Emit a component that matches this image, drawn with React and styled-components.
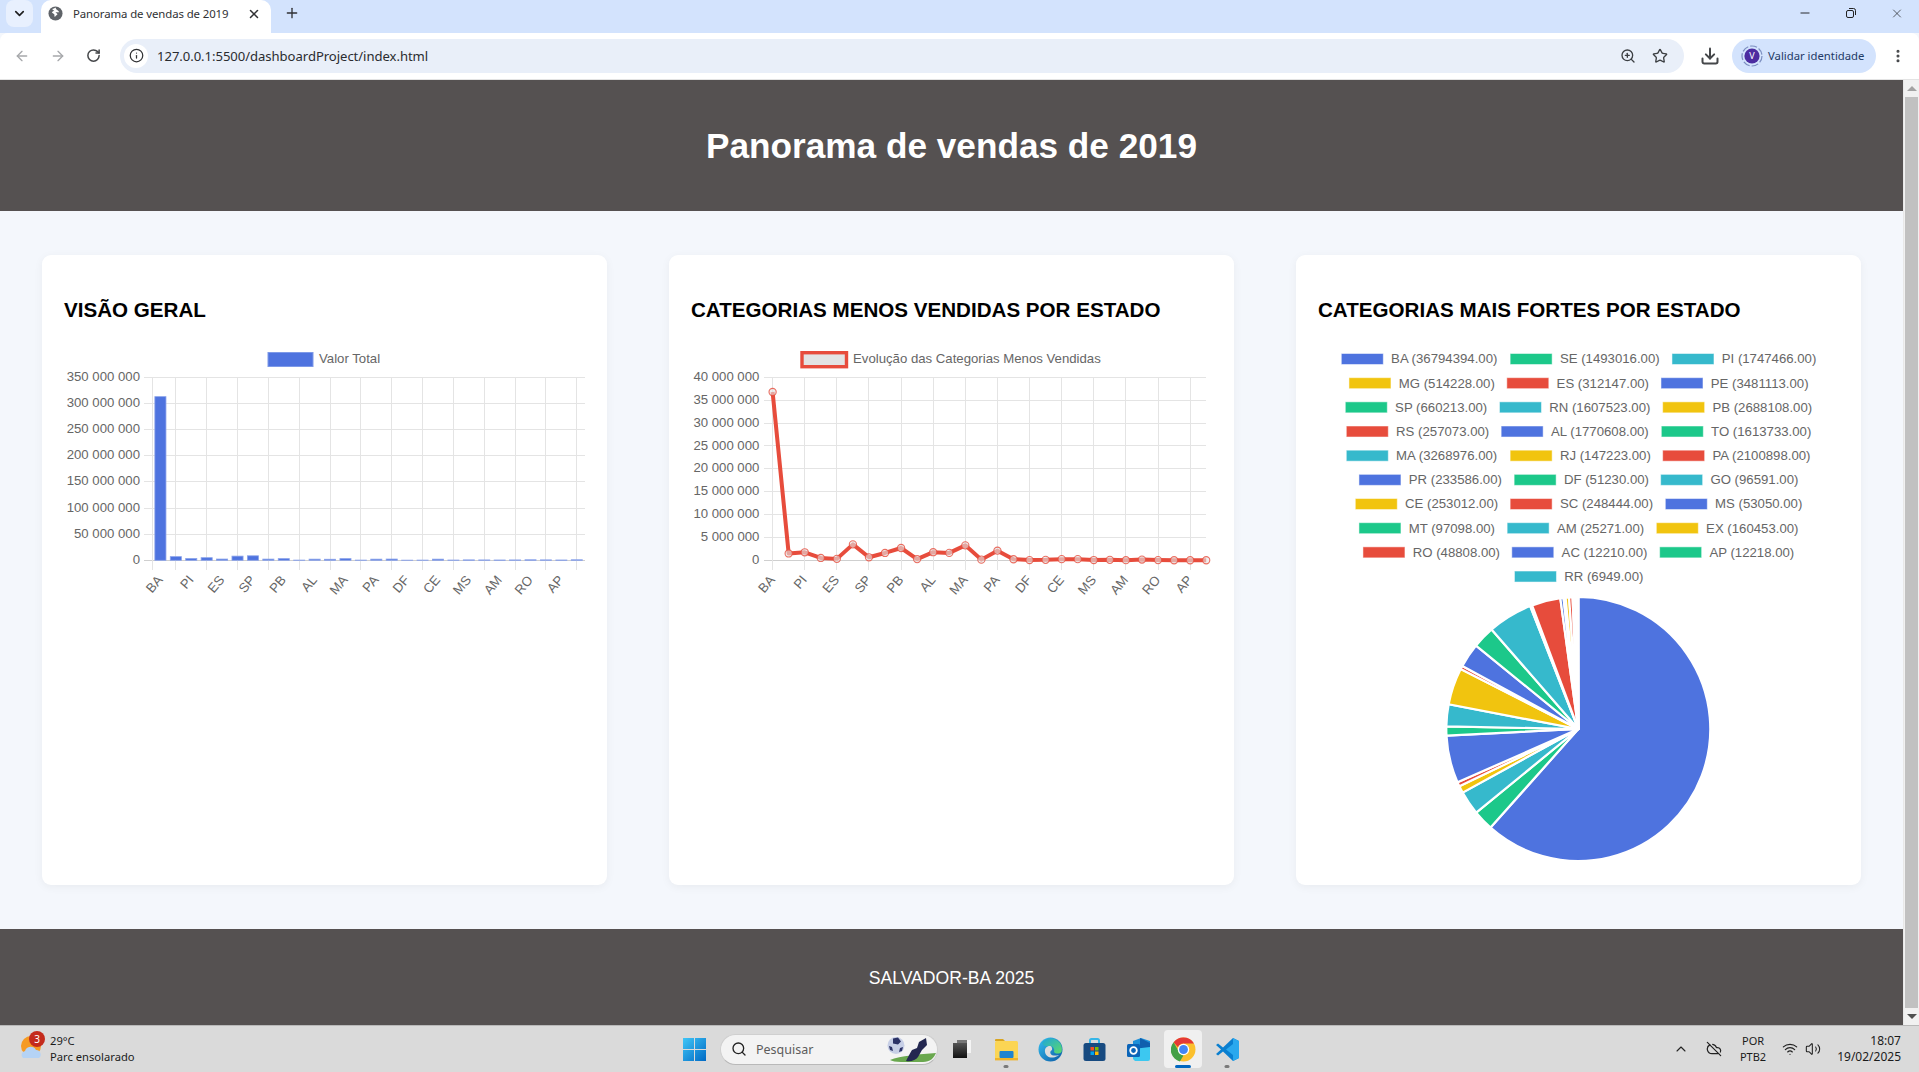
import React from "react";
import styled, { createGlobalStyle } from "styled-components";
import { ChevronDown, X, Plus, ArrowLeft, ArrowRight, RotateCw, Info, ZoomIn, Star, Download, MoreVertical, Minus, Search, ChevronUp, CloudOff, Wifi, Volume2 } from "lucide-react";

const Global = createGlobalStyle`
  html, body { margin: 0; padding: 0; width: 1919px; height: 1072px; overflow: hidden; background: #f4f7fc; }
  * { box-sizing: border-box; }
`;

const Screen = styled.div`
  width: 1919px; height: 1072px; display: flex; flex-direction: column; overflow: hidden;
  font-family: "Liberation Sans", Arial, sans-serif;
`;
const TabStrip = styled.div`
  height: 33px; flex: none; background: #d3e3fd; display: flex; align-items: flex-start; padding-left: 6px; color: #1f1f1f;
`;
const TabSearch = styled.div`
  width: 27px; height: 27px; border-radius: 8px; background: #e8f0fe; display: flex; align-items: center; justify-content: center; margin-right: 8px;
`;
const Tab = styled.div`
  width: 230px; height: 33px; background: #fff; border-radius: 10px 10px 0 0; display: flex; align-items: center; padding: 0 10px 6px 7px;
  font: 11.4px "Noto Sans", sans-serif; color: #303134; position: relative;
`;
const TabTitle = styled.span` margin-left: 10px; flex: 1; white-space: nowrap; letter-spacing: -0.1px; `;
const NewTab = styled.div` margin: 5px 0 0 13px; width: 16px; height: 16px; display: flex; color: #303134; `;
const WindowControls = styled.div`
  margin-left: auto; display: flex; align-items: center; height: 26px; gap: 0; padding-right: 15px;
`;
const WinButton = styled.div` width: 14px; height: 14px; margin-left: ${p => p.$gap}px; display: flex; color: #111; `;

const Toolbar = styled.div`
  height: 47px; flex: none; background: #fff; border-bottom: 1px solid #e3e3e3; display: flex; align-items: center; padding: 0 0 1px 0; border-radius: 8px 8px 0 0;
`;
const NavIcon = styled.div`
  width: ${p => p.$w || 16}px; height: ${p => p.$w || 16}px; margin-left: ${p => p.$gap}px; display: flex; color: ${p => p.$dim ? "#a6a8ab" : "#45474a"};
`;
const Omnibox = styled.div`
  width: 1564px; height: 34px; margin-left: 18px; border-radius: 17px; background: #e9eff9; display: flex; align-items: center; padding-left: 4px;
`;
const InfoChip = styled.div`
  width: 24px; height: 24px; border-radius: 50%; background: #fff; display: flex; align-items: center; justify-content: center; color: #303134; flex: none;
`;
const Url = styled.span`
  margin-left: 9px; font: 13.1px "Noto Sans", sans-serif; color: #2a2c30; letter-spacing: -0.05px; flex: 1; white-space: nowrap;
`;
const OmniIcon = styled.div` width: 16px; height: 16px; display: flex; color: #3c3f43; margin-right: ${p => p.$gap}px; `;
const ProfilePill = styled.div`
  width: 144px; height: 34px; margin-left: 12px; border-radius: 17px; background: #d3e3fd; display: flex; align-items: center; padding-left: 9px;
  font: 11.3px "Noto Sans", sans-serif; color: #1e3a66; white-space: nowrap;
`;
const PillText = styled.span` margin-left: 5px; `;

const ViewArea = styled.div` flex: 1; min-height: 0; display: flex; `;
const Page = styled.div` flex: 1; min-width: 0; display: flex; flex-direction: column; background: #f4f7fc; `;
const PageHeader = styled.header`
  height: 131px; flex: none; background: #555151; color: #fff; display: flex; align-items: center; justify-content: center;
`;
const PageTitle = styled.h1` margin: 0; font-size: 35.2px; font-weight: 700; line-height: 1; `;
const Main = styled.main`
  flex: 1; min-height: 0; display: grid; grid-template-columns: repeat(3, 1fr); grid-template-rows: minmax(0, 1fr); gap: 62px; padding: 44px 42px;
`;
const Card = styled.section`
  background: #fff; border-radius: 9px; padding: 22px; box-shadow: 0 2px 10px rgba(0,0,0,.05); min-height: 0;
`;
const CardTitle = styled.h2`
  margin: 20px 0 22px; font-size: 20.6px; line-height: 26px; font-weight: 700; color: #000; white-space: nowrap;
`;
const PageFooter = styled.footer`
  height: 96px; flex: none; background: #555151; color: #fff; display: flex; align-items: center; justify-content: center; font-size: 17.6px; padding-top: 2px;
`;
const ChartSvg = styled.svg` display: block; overflow: visible; `;
const Label = styled.text` font: 13.2px "Liberation Sans", Arial, sans-serif; fill: #666; `;

const Scrollbar = styled.div`
  width: 16px; flex: none; background: #f1f1f1; display: flex; flex-direction: column; align-items: center; border-left: 1px solid #e8e8e8;
`;
const ScrollArrow = styled.div`
  height: 17px; flex: none; display: flex; align-items: center; justify-content: center;
  &::before { content: ""; border-left: 5px solid transparent; border-right: 5px solid transparent;
    ${p => p.$up ? "border-bottom: 5px solid #a3a3a3;" : "border-top: 5px solid #505050;"} }
`;
const ScrollThumb = styled.div` flex: 1; width: 13px; background: #c1c1c1; `;

const Taskbar = styled.div`
  height: 47px; flex: none; background: #dadada; border-top: 1px solid #b8b8b8; display: flex; align-items: center; color: #1b1b1b;
  font: 11.2px "Noto Sans", sans-serif;
`;
const Weather = styled.div` width: 683px; flex: none; display: flex; align-items: center; padding-left: 20px; `;
const WeatherIcon = styled.div` width: 26px; height: 30px; position: relative; flex: none; `;
const Badge = styled.div`
  position: absolute; left: 9px; top: -3px; width: 16px; height: 16px; border-radius: 50%; background: #c42b1c; color: #fff;
  font-size: 10px; display: flex; align-items: center; justify-content: center; line-height: 1;
`;
const TrayText = styled.div` display: flex; flex-direction: column; line-height: 16px; margin-left: ${p => p.$gap || 4}px; text-align: ${p => p.$align || "left"}; white-space: nowrap; font-size: ${p => p.$size || 11.2}px; `;
const SearchPill = styled.div`
  width: 218px; height: 31px; margin-left: 14px; background: #f3f3f3; border-radius: 16px; border: 1px solid #cfcfcf; border-bottom-color: #b9b9b9; display: flex; align-items: center; padding: 0 1px 0 10px;
  font-size: 12.5px; color: #5c5c5c; position: relative; flex: none;
`;
const SearchText = styled.span` margin-left: 9px; flex: 1; `;
const TaskTile = styled.div`
  width: 44.2px; height: 38px; flex: none; display: flex; align-items: center; justify-content: center; position: relative; border-radius: 4px;
  margin-left: ${p => p.$first ? 2 : 0}px;
  ${p => p.$active && "background: #f0f0f0; width: 38px; margin: 0 3.1px;"}
  &::after {
    ${p => p.$dot && `content: ""; position: absolute; bottom: 0; left: 50%; transform: translateX(-50%); width: 5px; height: 3px; border-radius: 2px; background: #7a7a7a;`}
    ${p => p.$active && `content: ""; position: absolute; bottom: 0; left: 50%; transform: translateX(-50%); width: 16px; height: 3px; border-radius: 2px; background: #0067c0;`}
  }
`;
const Tray = styled.div` margin-left: auto; display: flex; align-items: center; padding-right: 18px; `;
const TrayIcon = styled.div` width: 16px; height: 16px; display: flex; margin-left: ${p => p.$gap}px; color: #222; `;

const BLUE = "#4e73df", GREEN = "#1cc88a", TEAL = "#36b9cc", YELLOW = "#f1c40f", RED = "#e74c3c";
const PAL = [BLUE, GREEN, TEAL, YELLOW, RED];
const STATES = [["BA",36794394],["SE",1493016],["PI",1747466],["MG",514228],["ES",312147],["PE",3481113],["SP",660213],["RN",1607523],["PB",2688108],["RS",257073],["AL",1770608],["TO",1613733],["MA",3268976],["RJ",147223],["PA",2100898],["PR",233586],["DF",51230],["GO",96591],["CE",253012],["SC",248444],["MS",53050],["MT",97098],["AM",25271],["EX",160453],["RO",48808],["AC",12210],["AP",12218],["RR",6949]];
const BAR_M = [313,7,3.4,5,2.4,8,8.6,2.3,3.2,.4,2.2,2,3.2,.4,2.2,2.4,.3,.4,2.2,.5,.8,.7,.6,.7,1,.8,.6,1];
const LEGEND_ROWS = [[94,601,1087],[117,591,1054],[106,569,1059],[109,574,1055],[109,601,1059],[147,613,1053],[136,601,1067],[147,592,1040],[159,606,1050],[614]];

const Top = 32.3, Bot = 215.3;

function Grid({ left, right, xs, count }) {
  const step = (Bot - Top) / count;
  return (
    <g stroke="#e4e4e4" strokeWidth="1" shapeRendering="crispEdges">
      {Array.from({ length: count + 1 }, (_, i) => (
        <line key={i} x1={left - 9} x2={right} y1={Top + step * i} y2={Top + step * i} stroke={i === count ? "#cfcfcf" : undefined} />
      ))}
      {xs.map((x, i) => <line key={i} x1={x} x2={x} y1={Top} y2={Bot + 10} />)}
    </g>
  );
}
function YLabels({ x, values, count }) {
  const step = (Bot - Top) / count;
  return values.map((v, i) => (
    <Label key={v} x={x} y={Top + step * i + 3.6} textAnchor="end">{v}</Label>
  ));
}
function XLabels({ at }) {
  const names = STATES.filter((_, i) => i % 2 === 0).map(s => s[0]).slice(0, 14);
  return names.map((n, i) => {
    const x = at(i * 2) + 3, y = Bot + 20;
    return <Label key={n} x={x} y={y} textAnchor="end" transform={`rotate(-50 ${x} ${y})`}>{n}</Label>;
  });
}

function BarChart() {
  const left = 88.7, right = 520.5, s = (right - left) / 28;
  const y = v => Bot - v / 350 * (Bot - Top);
  const xs = [left, ...Array.from({ length: 14 }, (_, i) => left + s * (1.5 + i * 2))];
  return (
    <ChartSvg width="521" height="270">
      <rect x="204" y="7.5" width="45" height="14" fill={BLUE} stroke="#7e9ae8" />
      <Label x="255" y="18">Valor Total</Label>
      <Grid left={left} right={right} xs={xs} count={7} />
      <YLabels x={76} count={7} values={["350 000 000","300 000 000","250 000 000","200 000 000","150 000 000","100 000 000","50 000 000","0"]} />
      {BAR_M.map((v, i) => (
        <rect key={i} x={left + s * (i + .5) - 5.55} width="11.1" y={y(v)} height={Bot - y(v)} fill={BLUE} stroke="#8ba3ea" strokeWidth=".8" />
      ))}
      <XLabels at={i => left + s * (i + .5)} />
    </ChartSvg>
  );
}

function LineChart() {
  const left = 81.6, right = 515.2, s = (right - left) / 27;
  const y = v => Bot - v / 4e7 * (Bot - Top);
  const xs = Array.from({ length: 14 }, (_, i) => left + s * i * 2);
  const pts = STATES.map(([, v], i) => [left + s * i, y(v)]);
  return (
    <ChartSvg width="521" height="270">
      <rect x="111" y="7.7" width="44.5" height="14" fill="#e3e3e3" stroke={RED} strokeWidth="3.4" />
      <Label x="162" y="18">Evolução das Categorias Menos Vendidas</Label>
      <Grid left={left} right={right} xs={xs} count={8} />
      <YLabels x={68.4} count={8} values={["40 000 000","35 000 000","30 000 000","25 000 000","20 000 000","15 000 000","10 000 000","5 000 000","0"]} />
      <polyline points={pts.map(p => p.join(",")).join(" ")} fill="none" stroke={RED} strokeWidth="4" strokeLinejoin="round" />
      {pts.map(([cx, cy], i) => (
        <circle key={i} cx={cx} cy={cy} r="3.6" fill="rgba(228,228,228,.6)" stroke={RED} strokeOpacity=".8" strokeWidth="1.1" />
      ))}
      <XLabels at={i => left + s * i} />
    </ChartSvg>
  );
}

function PieChart() {
  const ox = 1318, oy = 345;
  const cx = 1578.3 - ox, cy = 729 - oy, r = 132;
  const total = STATES.reduce((a, s) => a + s[1], 0);
  let a = -Math.PI / 2, idx = 0;
  const slices = STATES.map(([n, v], i) => {
    const b = a + v / total * Math.PI * 2;
    const d = `M${cx} ${cy}L${cx + r * Math.cos(a)} ${cy + r * Math.sin(a)}A${r} ${r} 0 ${b - a > Math.PI ? 1 : 0} 1 ${cx + r * Math.cos(b)} ${cy + r * Math.sin(b)}Z`;
    a = b;
    return <path key={n} d={d} fill={PAL[i % 5]} stroke="#fff" strokeWidth="2.2" strokeLinejoin="round" />;
  });
  return (
    <ChartSvg width="521" height="518">
      {LEGEND_ROWS.map((row, ri) => row.map(bx => {
        const i = idx++;
        const x = 1310 + bx / 3.003 - ox;
        const y = 14 + ri * 24.17;
        return (
          <g key={i}>
            <rect x={x} y={y - 5.5} width="42" height="11" fill={PAL[i % 5]} stroke="#fff" strokeOpacity=".5" />
            <Label x={x + 49.8} y={y + 4.4}>{`${STATES[i][0]} (${STATES[i][1]}.00)`}</Label>
          </g>
        );
      }))}
      {slices}
    </ChartSvg>
  );
}

const Globe = () => (
  <svg width="15" height="15" viewBox="0 0 16 16"><circle cx="8" cy="8" r="7.5" fill="#5f6368" /><path d="M8 1.6c-.9 1-2.4 1.2-3.6 1.6.5 1 1.8 1.2 2.3 2.2-.6.8-2 .4-2.6 1.1.4 1 1.7 1.6 2.6 2.3.4.9-.2 2.1.6 2.8.7-1.1 2-1.8 2.8-2.9-.4-.8-1.6-1.3-2.3-1.7 1.3-.5 3-.4 4.2-.3-.6-1.2-1.6-2-2.6-2.6-.6-.5-.9-1.3-1.4-2.5z" fill="#fff" /></svg>
);
const Restore = () => (
  <svg width="14" height="14" viewBox="0 0 14 14" fill="none" stroke="#222" strokeWidth="1"><rect x="2.5" y="4.5" width="7" height="7" rx="1.5" /><path d="M5 2.5h4.500a2 2 0 0 1 2 2V9" /></svg>
);
const Avatar = () => (
  <svg width="22" height="22" viewBox="0 0 22 22" style={{ flex: "none" }}><circle cx="11" cy="11" r="10" fill="none" stroke="#7c8fc0" strokeWidth="1.2" strokeDasharray="7 2" /><circle cx="11" cy="11" r="7.6" fill="#4c2ca0" /><text x="11" y="14.2" textAnchor="middle" fontSize="9" fill="#fff" fontFamily="Noto Sans">V</text></svg>
);
const WinLogo = () => (
  <svg width="23" height="23" viewBox="0 0 23 23" style={{ flex: "none" }}><defs><linearGradient id="w" x1="0" y1="0" x2="1" y2="1"><stop offset="0" stopColor="#3fc6f7" /><stop offset="1" stopColor="#0069c4" /></linearGradient></defs><path d="M0 0h11v11H0zM12 0h11v11H12zM0 12h11v11H0zM12 12h11v11H12z" fill="url(#w)" /></svg>
);
const Ball = () => (
  <svg width="51" height="28" viewBox="0 0 51 28" style={{ flex: "none" }}><path d="M5 25c10-4 30-6 46-7-2 5-6 9-13 9H16c-5 0-9-1-11-2z" fill="#6aa84f" /><circle cx="11" cy="10.500" r="8.500" fill="#c7cfe6" /><path d="M8 3.500l5-1 3 4-3 3-5-1zM4 11l3 1 1 4-3-1zM15 13l3-1-1 4-3 1z" fill="#2b3266" /><path d="M21 26c2-4 4-8 6-11l5-2 2-6 7-4 1 7-5 5-4 7c-2 3-7 5-12 4z" fill="#232750" /></svg>
);
const FolderIcon = () => (
  <svg width="25" height="25" viewBox="0 0 25 25"><path d="M1 3a1 1 0 0 1 1-1h7l2 2h-10z" fill="#d9a520" /><rect x="1" y="4" width="23" height="19" rx="1.500" fill="#fbd554" /><rect x="5.500" y="14" width="14" height="7" rx="1" fill="#1f84d0" /><rect x="1" y="21" width="23" height="2.400" fill="#f0b429" /></svg>
);
const EdgeIcon = () => (
  <svg width="25" height="25" viewBox="0 0 25 25"><defs><linearGradient id="e1" x1="0" y1="0" x2="1" y2="1"><stop offset="0" stopColor="#35c1f1" /><stop offset="1" stopColor="#0c59a4" /></linearGradient><linearGradient id="e2" x1="0" y1="0" x2="1" y2="1"><stop offset="0" stopColor="#1ea5d9" /><stop offset="1" stopColor="#5fdb6a" /></linearGradient></defs><circle cx="12.500" cy="12.500" r="12" fill="url(#e1)" /><path d="M4 6c3-5 11-6 16-2 4 3 4.500 8 3.500 11-2 2-6 2-7.500 0 1-3-1-6-4-6C9 9 6 10 4 6z" fill="url(#e2)" /><path d="M12 9c-3.500 0-5.500 2.500-5 6 .5 3.500 4 6 8 5.500 2.500-.3 4.500-1.200 6-2.500-3 1-7.500 1-8.500-1.500-.7-2 .5-3 1.500-3.500.5-2-.5-4-2-4z" fill="#dcdcdc" /></svg>
);
const StoreIcon = () => (
  <svg width="25" height="25" viewBox="0 0 25 25"><path d="M8 7V3.500A1.500 1.500 0 0 1 9.500 2h6A1.500 1.500 0 0 1 17 3.500V7" fill="none" stroke="#35b6e8" strokeWidth="2" /><rect x="1.500" y="6" width="22" height="18" rx="2.500" fill="#174a80" /><path d="M8.500 10h3.500v3.500H8.500z" fill="#f25022" /><path d="M13 10h3.500v3.500H13z" fill="#7fba00" /><path d="M8.500 14.500h3.500V18H8.500z" fill="#00a4ef" /><path d="M13 14.500h3.500V18H13z" fill="#ffb900" /></svg>
);
const OutlookIcon = () => (
  <svg width="25" height="25" viewBox="0 0 25 25"><path d="M7 4l8-3 9 3v18H7z" fill="#1e8fd8" /><path d="M14 1l10 5v6l-10 2z" fill="#0f5fae" /><path d="M7 12l17-2v12a2 2 0 0 1-2 2H9l-2-2z" fill="#3cc8f0" /><rect x="1" y="7" width="13" height="13" rx="1.500" fill="#0a64b8" /><circle cx="7.500" cy="13.500" r="3.300" fill="none" stroke="#fff" strokeWidth="1.800" /></svg>
);
const ChromeIcon = () => (
  <svg width="25" height="25" viewBox="0 0 48 48"><circle cx="24" cy="24" r="23" fill="#fbc02d" /><path d="M24 1a23 23 0 0 1 20 11.500H24a11.500 11.500 0 0 0-10.500 7L5 10A23 23 0 0 1 24 1z" fill="#e53935" /><path d="M5 10l9.500 17A11.500 11.500 0 0 0 24 35.500L17 47A23 23 0 0 1 5 10z" fill="#43a047" /><circle cx="24" cy="24" r="11" fill="#fff" /><circle cx="24" cy="24" r="8.500" fill="#4285f4" /></svg>
);
const CodeIcon = () => (
  <svg width="25" height="25" viewBox="0 0 25 25"><path d="M18 1l6 3v17l-6 3-10-9.500-5 4L1 17l5-4.500L1 8l2-1.500 5 4z" fill="#0a7fd0" /><path d="M18 1l6 3v17l-6 3V7l-7 5.500 7 5.500" fill="#2aa8ee" /></svg>
);
const SunCloud = () => (
  <svg width="26" height="30" viewBox="0 0 26 30"><circle cx="11" cy="12" r="10" fill="#f59a23" /><path d="M3 24a4 4 0 0 1 2-7 6 6 0 0 1 11-1 4.500 4.500 0 0 1 3 8z" fill="#b5d3f5" /></svg>
);
const TaskView = () => (
  <svg width="22" height="22" viewBox="0 0 22 22"><defs><linearGradient id="tv" x1="0" y1="0" x2="0" y2="1"><stop offset="0" stopColor="#555" /><stop offset="1" stopColor="#111" /></linearGradient></defs><rect x="2" y="5" width="14" height="15" fill="url(#tv)" /><rect x="6" y="2" width="14" height="3" fill="#777" /><rect x="16" y="2" width="4" height="13" fill="#f4f4f4" /></svg>
);

export default function App() {
  return (
    <>
      <Global />
      <Screen>
        <TabStrip>
          <TabSearch><ChevronDown size={15} strokeWidth={2.6} /></TabSearch>
          <Tab>
            <Globe />
            <TabTitle>Panorama de vendas de 2019</TabTitle>
            <X size={14} strokeWidth={2.6} />
          </Tab>
          <NewTab><Plus size={16} strokeWidth={2} /></NewTab>
          <WindowControls>
            <WinButton $gap={0}><Minus size={14} strokeWidth={1.5} /></WinButton>
            <WinButton $gap={32}><Restore /></WinButton>
            <WinButton $gap={32}><X size={15} strokeWidth={1.1} /></WinButton>
          </WindowControls>
        </TabStrip>
        <Toolbar>
          <NavIcon $gap={14} $dim><ArrowLeft size={16} /></NavIcon>
          <NavIcon $gap={20} $dim><ArrowRight size={16} /></NavIcon>
          <NavIcon $gap={20}><RotateCw size={15} strokeWidth={2.4} /></NavIcon>
          <Omnibox>
            <InfoChip><Info size={15} strokeWidth={2} /></InfoChip>
            <Url>127.0.0.1:5500/dashboardProject/index.html</Url>
            <OmniIcon $gap={16}><ZoomIn size={16} strokeWidth={2} /></OmniIcon>
            <OmniIcon $gap={16}><Star size={16} strokeWidth={2} /></OmniIcon>
          </Omnibox>
          <NavIcon $gap={16} $w={20}><Download size={20} strokeWidth={2.4} /></NavIcon>
          <ProfilePill><Avatar /><PillText>Validar identidade</PillText></ProfilePill>
          <NavIcon $gap={14}><MoreVertical size={16} strokeWidth={2.6} /></NavIcon>
        </Toolbar>
        <ViewArea>
          <Page>
            <PageHeader><PageTitle>Panorama de vendas de 2019</PageTitle></PageHeader>
            <Main>
              <Card><CardTitle>VISÃO GERAL</CardTitle><BarChart /></Card>
              <Card><CardTitle>CATEGORIAS MENOS VENDIDAS POR ESTADO</CardTitle><LineChart /></Card>
              <Card><CardTitle>CATEGORIAS MAIS FORTES POR ESTADO</CardTitle><PieChart /></Card>
            </Main>
            <PageFooter>SALVADOR-BA 2025</PageFooter>
          </Page>
          <Scrollbar>
            <ScrollArrow $up />
            <ScrollThumb />
            <ScrollArrow />
          </Scrollbar>
        </ViewArea>
        <Taskbar>
          <Weather>
            <WeatherIcon><SunCloud /><Badge>3</Badge></WeatherIcon>
            <TrayText><span>29°C</span><span>Parc ensolarado</span></TrayText>
          </Weather>
          <WinLogo />
          <SearchPill>
            <Search size={16} strokeWidth={2} color="#222" />
            <SearchText>Pesquisar</SearchText>
            <Ball />
          </SearchPill>
          <TaskTile $first><TaskView /></TaskTile>
          <TaskTile $dot><FolderIcon /></TaskTile>
          <TaskTile><EdgeIcon /></TaskTile>
          <TaskTile><StoreIcon /></TaskTile>
          <TaskTile><OutlookIcon /></TaskTile>
          <TaskTile $active><ChromeIcon /></TaskTile>
          <TaskTile $dot><CodeIcon /></TaskTile>
          <Tray>
            <TrayIcon $gap={0}><ChevronUp size={16} strokeWidth={1.6} /></TrayIcon>
            <TrayIcon $gap={17}><CloudOff size={16} strokeWidth={1.8} /></TrayIcon>
            <TrayText $gap={18} $align="center" $size={11}><span>POR</span><span>PTB2</span></TrayText>
            <TrayIcon $gap={16}><Wifi size={16} strokeWidth={1.8} /></TrayIcon>
            <TrayIcon $gap={7}><Volume2 size={16} strokeWidth={1.6} /></TrayIcon>
            <TrayText $gap={16} $align="right" $size={12}><span>18:07</span><span>19/02/2025</span></TrayText>
          </Tray>
        </Taskbar>
      </Screen>
    </>
  );
}
